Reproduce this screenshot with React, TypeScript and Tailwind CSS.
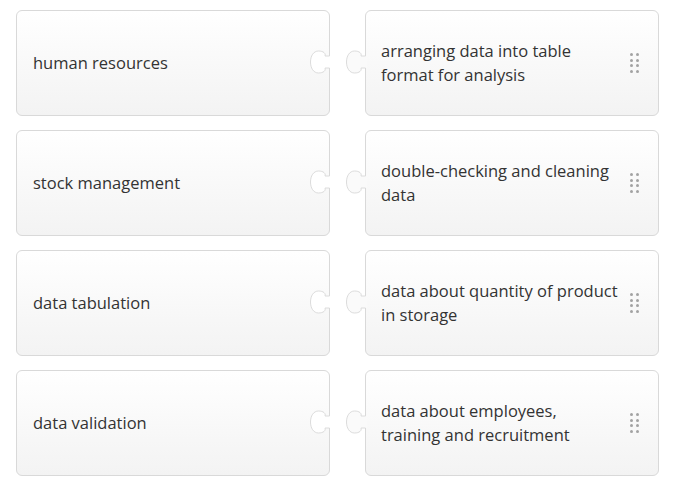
import React from "react";

type Pair = { left: string; right: string };

const PAIRS: Pair[] = [
  { left: "human resources", right: "arranging data into table format for analysis" },
  { left: "stock management", right: "double-checking and cleaning data" },
  { left: "data tabulation", right: "data about quantity of product in storage" },
  { left: "data validation", right: "data about employees, training and recruitment" },
];

// puzzle knob, opening on the edge at x=0, bulging to the left
const KNOB =
  "M0 -6 L-4.5 -6 C-3.5 -8.5 -6 -11 -11 -11 C-16 -11 -19 -6 -19 0 C-19 6 -16 11 -11 11 C-6 11 -3.5 8.5 -4.5 6 L0 6";

function Socket() {
  return (
    <svg className="absolute right-[-1px] top-[37px]" width="24" height="28" viewBox="-23.5 -14 24 28">
      <path d={`${KNOB} L1 6 L1 -6 Z`} fill="#ffffff" />
      <path d={KNOB} fill="none" stroke="#dcdcdc" strokeWidth="1" />
    </svg>
  );
}

function Tab() {
  return (
    <svg className="absolute left-[-25px] top-[37px]" width="26" height="28" viewBox="-24.5 -14 26 28">
      <path d={`${KNOB} L1.5 6 L1.5 -6 Z`} fill="#fafafa" />
      <path d={KNOB} fill="none" stroke="#dcdcdc" strokeWidth="1" />
    </svg>
  );
}

function Handle() {
  return (
    <div className="grid grid-cols-2 gap-x-[3px] gap-y-[2.5px] shrink-0">
      {Array.from({ length: 8 }).map((_, i) => (
        <span key={i} className="w-[3px] h-[3px] rounded-full bg-[#a3a3a3]" />
      ))}
    </div>
  );
}

export default function App() {
  return (
    <div
      className="w-[681px] h-[486px] bg-white pt-[10px] pl-[16px] text-[16.5px] leading-[24px] text-[#333333]"
      style={{ fontFamily: '"Open Sans", "Noto Sans", sans-serif' }}
    >
      <div className="flex flex-col gap-[14px]">
        {PAIRS.map((p) => (
          <div key={p.left} className="flex gap-[35px]">
            <div className="relative w-[314px] h-[106px] rounded-[6px] border border-[#d9d9d9] bg-gradient-to-b from-white to-[#f3f3f3] flex items-center pl-[16px]">
              <span>{p.left}</span>
              <Socket />
            </div>
            <div className="relative w-[294px] h-[106px] rounded-[6px] border border-[#d9d9d9] bg-gradient-to-b from-white to-[#f3f3f3] flex items-center pl-[15px] pr-[19px]">
              <span className="w-[238px]">{p.right}</span>
              <div className="flex-1 flex justify-end">
                <Handle />
              </div>
              <Tab />
            </div>
          </div>
        ))}
      </div>
    </div>
  );
}
